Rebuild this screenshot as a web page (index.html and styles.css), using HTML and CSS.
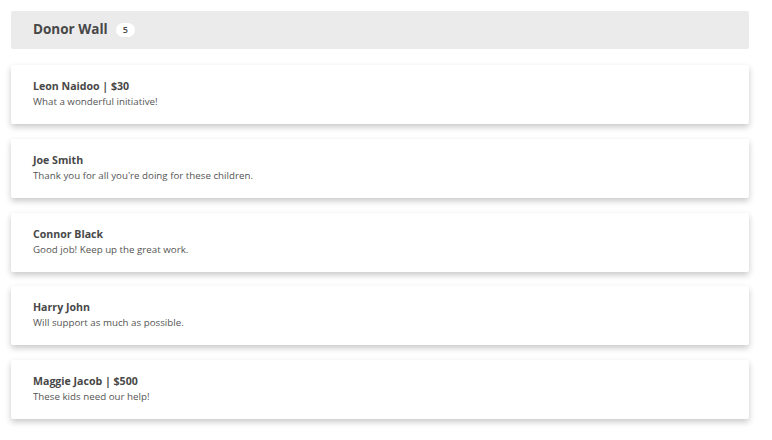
FILE: index.html
```html
<!DOCTYPE html>
<html>
<head>
<meta charset="utf-8">
<link rel="stylesheet" href="styles.css">
</head>
<body>
<div class="wall">
  <div class="wall-header">
    <h1 class="wall-title">Donor Wall</h1>
    <span class="count">5</span>
  </div>
  <div class="list">
    <div class="card">
      <div class="name">Leon Naidoo | $30</div>
      <div class="msg">What a wonderful initiative!</div>
    </div>
    <div class="card">
      <div class="name">Joe Smith</div>
      <div class="msg">Thank you for all you're doing for these children.</div>
    </div>
    <div class="card">
      <div class="name">Connor Black</div>
      <div class="msg">Good job! Keep up the great work.</div>
    </div>
    <div class="card">
      <div class="name">Harry John</div>
      <div class="msg">Will support as much as possible.</div>
    </div>
    <div class="card">
      <div class="name">Maggie Jacob | $500</div>
      <div class="msg">These kids need our help!</div>
    </div>
  </div>
</div>
</body>
</html>
```
FILE: styles.css
```css
html, body {
  margin: 0;
  padding: 0;
  background: #ffffff;
}
body {
  font-family: "Open Sans", "Noto Sans", sans-serif;
  color: #474747;
}
.wall {
  width: 738px;
  padding: 11px;
}
.wall-header {
  height: 38px;
  background: #ebebeb;
  border-radius: 2px;
  display: flex;
  align-items: center;
  padding: 0 22px;
  gap: 8px;
}
.wall-title {
  margin: 0 0 2px;
  font-size: 13.5px;
  font-weight: 700;
  color: #474747;
}
.count {
  background: #ffffff;
  border-radius: 7px;
  font-size: 9px;
  font-weight: 600;
  line-height: 14px;
  padding: 0 7px;
  margin-bottom: 1px;
  color: #474747;
}
.list {
  display: flex;
  flex-direction: column;
  gap: 14.75px;
  margin-top: 16px;
}
.card {
  background: #ffffff;
  border-radius: 2px;
  box-shadow: 0 3px 6px rgba(0, 0, 0, 0.22);
  padding: 13px 22px 15px;
  height: 31px;
}
.name {
  font-size: 10.6px;
  font-weight: 700;
  line-height: 16px;
  color: #474747;
}
.msg {
  font-size: 9.75px;
  line-height: 15px;
  color: #555555;
}
```
